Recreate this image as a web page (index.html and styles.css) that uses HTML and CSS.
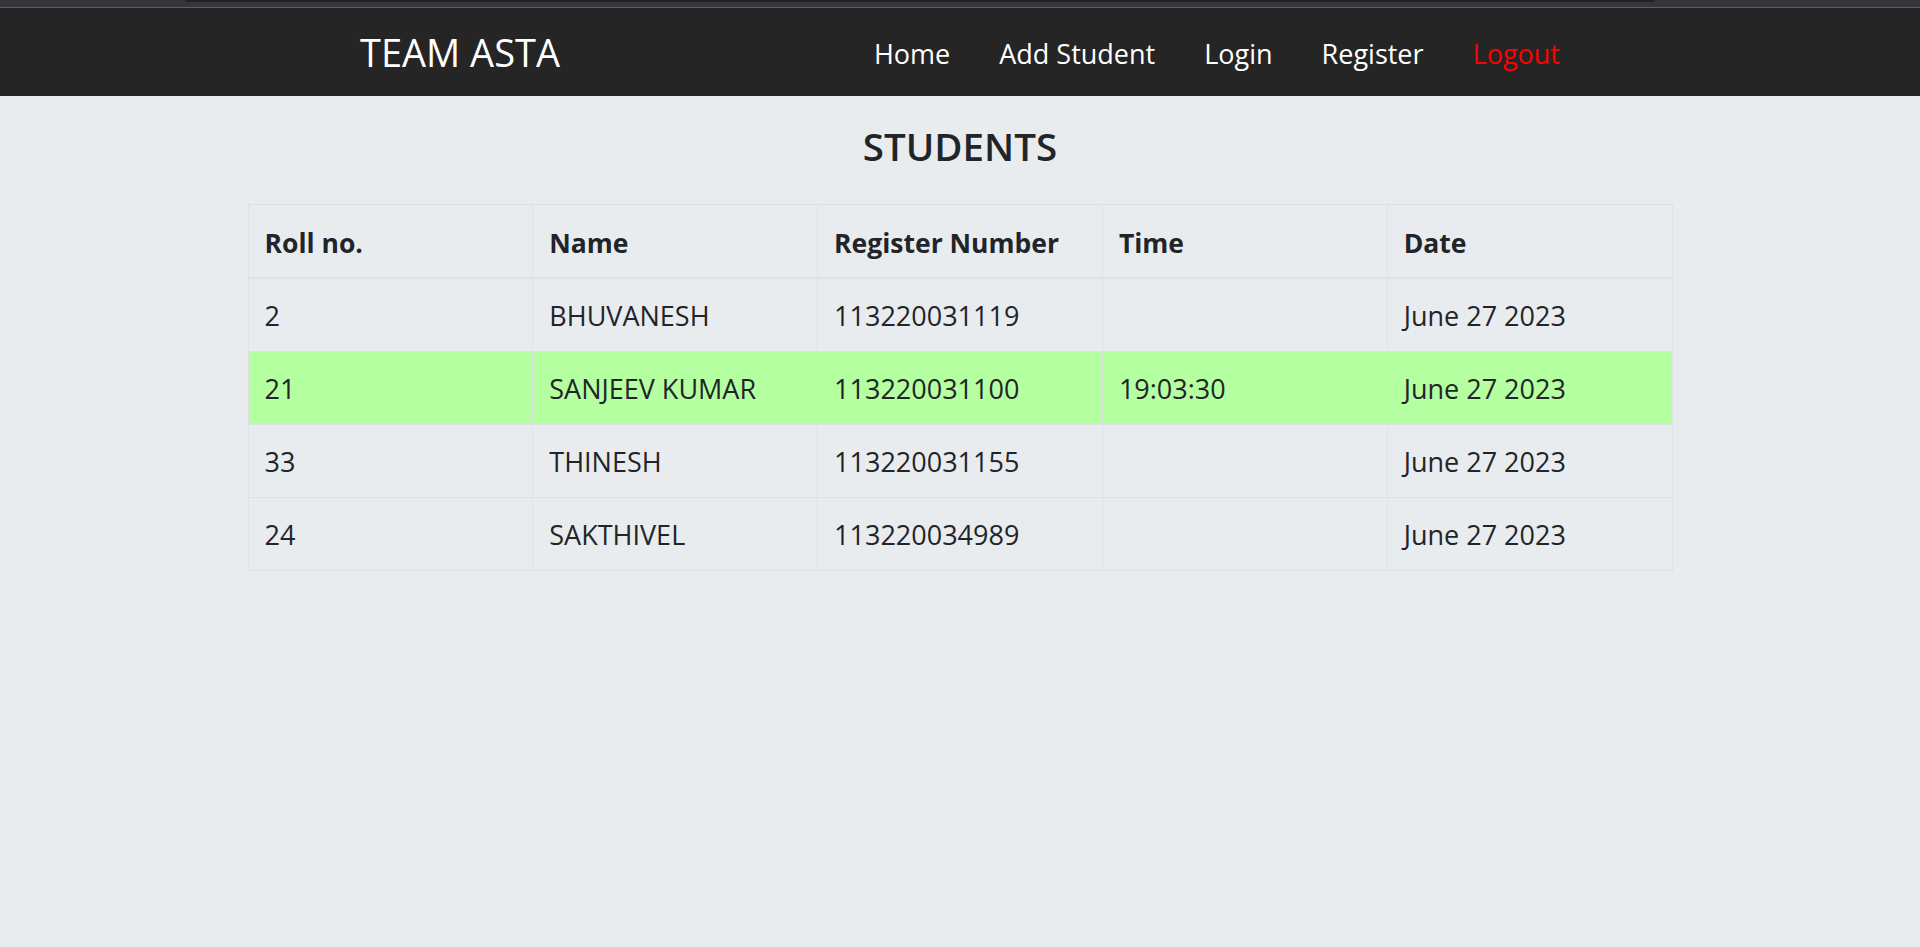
FILE: index.html
```html
<!DOCTYPE html>
<html lang="en">
<head>
<meta charset="utf-8">
<title>Students</title>
<link rel="stylesheet" href="styles.css">
</head>
<body>
<div class="chrome"><div class="chrome-tab"></div></div>
<nav class="navbar">
  <div class="nav-inner">
    <a class="brand" href="#">TEAM ASTA</a>
    <ul class="nav-links">
      <li><a href="#">Home</a></li>
      <li><a href="#">Add Student</a></li>
      <li><a href="#">Login</a></li>
      <li><a href="#">Register</a></li>
      <li><a href="#" class="logout">Logout</a></li>
    </ul>
  </div>
</nav>
<main class="content">
  <h2 class="title">STUDENTS</h2>
  <table class="students">
    <thead>
      <tr><th>Roll no.</th><th>Name</th><th>Register Number</th><th>Time</th><th>Date</th></tr>
    </thead>
    <tbody>
      <tr><td>2</td><td>BHUVANESH</td><td>113220031119</td><td></td><td>June 27 2023</td></tr>
      <tr class="present"><td>21</td><td>SANJEEV KUMAR</td><td>113220031100</td><td>19:03:30</td><td>June 27 2023</td></tr>
      <tr><td>33</td><td>THINESH</td><td>113220031155</td><td></td><td>June 27 2023</td></tr>
      <tr><td>24</td><td>SAKTHIVEL</td><td>113220034989</td><td></td><td>June 27 2023</td></tr>
    </tbody>
  </table>
</main>
</body>
</html>
```

FILE: styles.css
```css
* { box-sizing: border-box; }
html, body {
  margin: 0;
  padding: 0;
  background: #e9ecef;
  font-family: "Open Sans", "Noto Sans", sans-serif;
  color: #212529;
  min-height: 947px;
}
.chrome {
  height: 8px;
  background: #35363a;
  border-bottom: 1px solid #5f6064;
  padding: 0 265px 0 185px;
}
.chrome-tab {
  height: 2px;
  background: #202124;
  border-radius: 0 0 6px 6px;
}
.navbar {
  background: #252525;
  height: 88px;
}
.nav-inner {
  max-width: 1200px;
  height: 100%;
  margin: 0 auto;
  display: flex;
  align-items: center;
  justify-content: space-between;
}
.brand {
  color: #ffffff;
  text-decoration: none;
  font-size: 38px;
  line-height: 1;
  padding-top: 0;
}
.nav-links {
  list-style: none;
  margin: 0;
  padding: 4px 0 0;
  display: flex;
  gap: 49px;
}
.nav-links a {
  color: #ffffff;
  text-decoration: none;
  font-size: 27px;
  line-height: 1;
}
.nav-links a.logout { color: #ff0000; }
.content {
  width: 1425px;
  margin: 0 auto;
  padding-top: 22px;
}
.title {
  margin: 0 0 28px;
  text-align: center;
  font-size: 38.5px;
  font-weight: 600;
  line-height: 1.5;
}
.students {
  width: 100%;
  border-collapse: collapse;
  table-layout: fixed;
  font-size: 27px;
}
.students th, .students td {
  border: 1px solid #dee2e6;
  padding: 17px 16px 15px;
  text-align: left;
  line-height: 40px;
  height: 73px;
}
.students th { font-weight: 700; font-size: 26.5px; padding-top: 18px; padding-bottom: 14px; }
.students thead th { border-bottom: 2px solid #dee2e6; height: 74px; }
.students tr.present td { background: #b4ff9f; }
```
